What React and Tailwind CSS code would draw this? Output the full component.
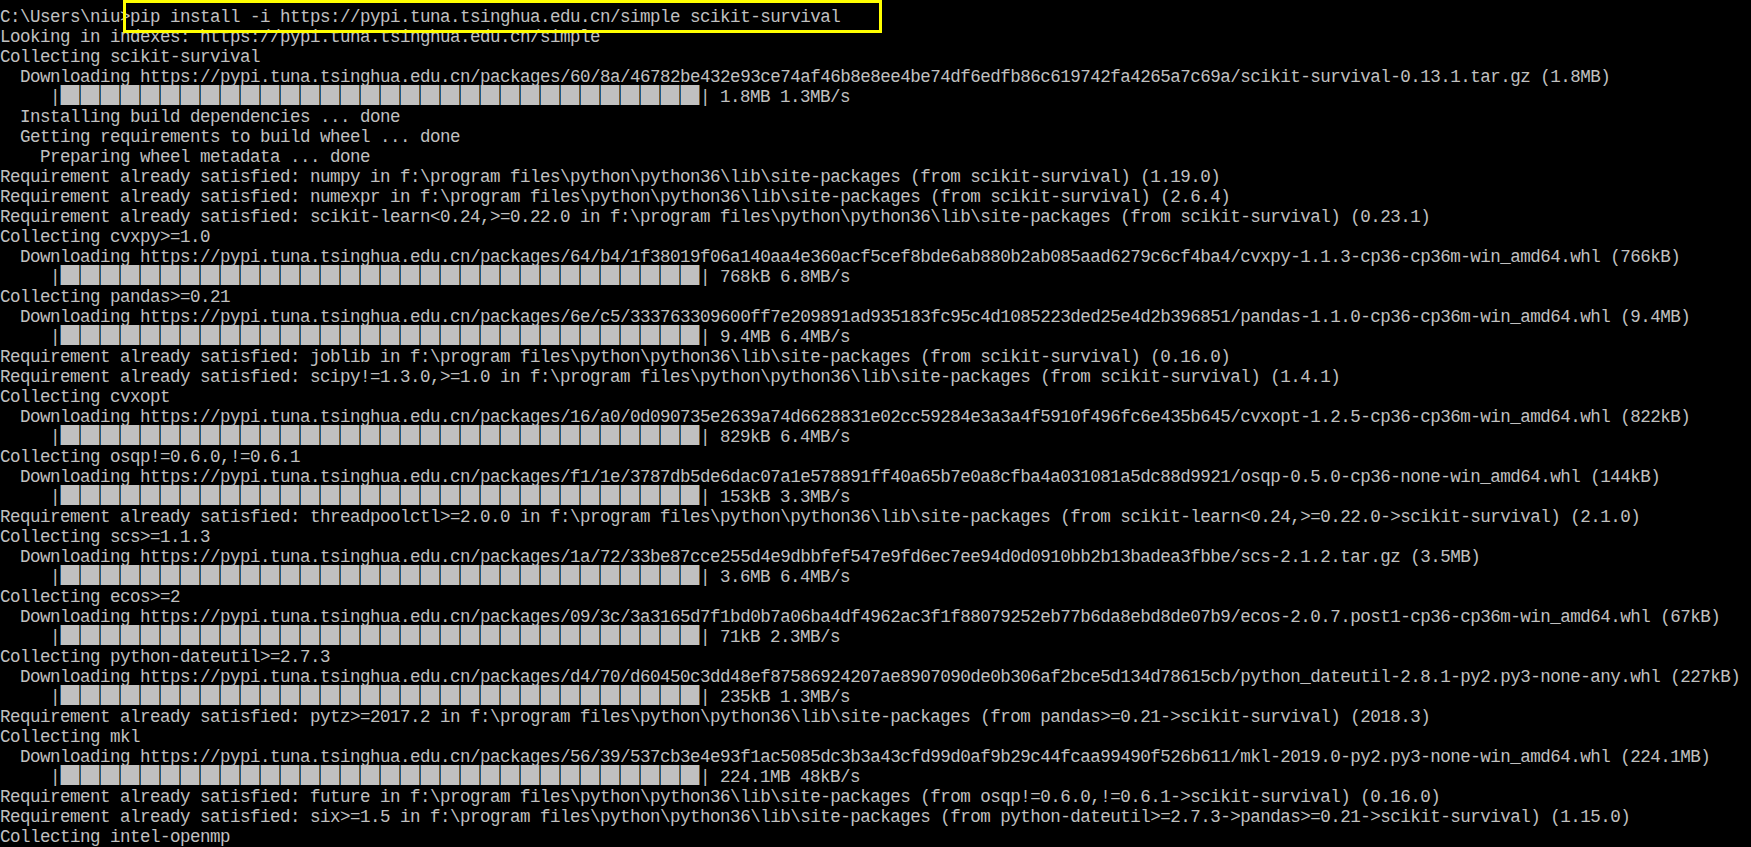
import React from "react";

const SITE = "in f:\\program files\\python\\python36\\lib\\site-packages";
const MIRROR = "https://pypi.tuna.tsinghua.edu.cn";

// each entry is one console row; bar rows carry the size / speed text
const lines = [
    "C:\\Users\\niu>pip install -i " + MIRROR + "/simple scikit-survival",
    "Looking in indexes: " + MIRROR + "/simple",
    "Collecting scikit-survival",
    "  Downloading " + MIRROR + "/packages/60/8a/46782be432e93ce74af46b8e8ee4be74df6edfb86c619742fa4265a7c69a/scikit-survival-0.13.1.tar.gz (1.8MB)",
    { bar: "1.8MB 1.3MB/s" },
    "  Installing build dependencies ... done",
    "  Getting requirements to build wheel ... done",
    "    Preparing wheel metadata ... done",
    "Requirement already satisfied: numpy " + SITE + " (from scikit-survival) (1.19.0)",
    "Requirement already satisfied: numexpr " + SITE + " (from scikit-survival) (2.6.4)",
    "Requirement already satisfied: scikit-learn<0.24,>=0.22.0 " + SITE + " (from scikit-survival) (0.23.1)",
    "Collecting cvxpy>=1.0",
    "  Downloading " + MIRROR + "/packages/64/b4/1f38019f06a140aa4e360acf5cef8bde6ab880b2ab085aad6279c6cf4ba4/cvxpy-1.1.3-cp36-cp36m-win_amd64.whl (766kB)",
    { bar: "768kB 6.8MB/s" },
    "Collecting pandas>=0.21",
    "  Downloading " + MIRROR + "/packages/6e/c5/333763309600ff7e209891ad935183fc95c4d1085223ded25e4d2b396851/pandas-1.1.0-cp36-cp36m-win_amd64.whl (9.4MB)",
    { bar: "9.4MB 6.4MB/s" },
    "Requirement already satisfied: joblib " + SITE + " (from scikit-survival) (0.16.0)",
    "Requirement already satisfied: scipy!=1.3.0,>=1.0 " + SITE + " (from scikit-survival) (1.4.1)",
    "Collecting cvxopt",
    "  Downloading " + MIRROR + "/packages/16/a0/0d090735e2639a74d6628831e02cc59284e3a3a4f5910f496fc6e435b645/cvxopt-1.2.5-cp36-cp36m-win_amd64.whl (822kB)",
    { bar: "829kB 6.4MB/s" },
    "Collecting osqp!=0.6.0,!=0.6.1",
    "  Downloading " + MIRROR + "/packages/f1/1e/3787db5de6dac07a1e578891ff40a65b7e0a8cfba4a031081a5dc88d9921/osqp-0.5.0-cp36-none-win_amd64.whl (144kB)",
    { bar: "153kB 3.3MB/s" },
    "Requirement already satisfied: threadpoolctl>=2.0.0 " + SITE + " (from scikit-learn<0.24,>=0.22.0->scikit-survival) (2.1.0)",
    "Collecting scs>=1.1.3",
    "  Downloading " + MIRROR + "/packages/1a/72/33be87cce255d4e9dbbfef547e9fd6ec7ee94d0d0910bb2b13badea3fbbe/scs-2.1.2.tar.gz (3.5MB)",
    { bar: "3.6MB 6.4MB/s" },
    "Collecting ecos>=2",
    "  Downloading " + MIRROR + "/packages/09/3c/3a3165d7f1bd0b7a06ba4df4962ac3f1f88079252eb77b6da8ebd8de07b9/ecos-2.0.7.post1-cp36-cp36m-win_amd64.whl (67kB)",
    { bar: "71kB 2.3MB/s" },
    "Collecting python-dateutil>=2.7.3",
    "  Downloading " + MIRROR + "/packages/d4/70/d60450c3dd48ef87586924207ae8907090de0b306af2bce5d134d78615cb/python_dateutil-2.8.1-py2.py3-none-any.whl (227kB)",
    { bar: "235kB 1.3MB/s" },
    "Requirement already satisfied: pytz>=2017.2 " + SITE + " (from pandas>=0.21->scikit-survival) (2018.3)",
    "Collecting mkl",
    "  Downloading " + MIRROR + "/packages/56/39/537cb3e4e93f1ac5085dc3b3a43cfd99d0af9b29c44fcaa99490f526b611/mkl-2019.0-py2.py3-none-win_amd64.whl (224.1MB)",
    { bar: "224.1MB 48kB/s" },
    "Requirement already satisfied: future " + SITE + " (from osqp!=0.6.0,!=0.6.1->scikit-survival) (0.16.0)",
    "Requirement already satisfied: six>=1.5 " + SITE + " (from python-dateutil>=2.7.3->pandas>=0.21->scikit-survival) (1.15.0)",
    "Collecting intel-openmp",
];

const blocks = Array.from({ length: 32 });

function ProgressRow({ text }) {
    return (
        <div className="flex items-start h-[20px]">
            <span className="leading-[20px]">{"     |"}</span>
            {blocks.map((_, i) => (
                <span
                    key={i}
                    className="w-[20px] h-[20px] -mt-[2px] shrink-0 bg-[#c0c0c0] border-l border-l-[#1d5b8c] border-r border-r-[#7c5a2a]"
                />
            ))}
            <span className="leading-[20px]">{"| " + text}</span>
        </div>
    );
}

export default function App() {
    return (
        <div className="relative w-full h-[847px] overflow-hidden bg-black text-[#c0c0c0] pt-[7px] font-['Liberation_Mono',monospace] text-[17.5px] tracking-[-0.5px] whitespace-pre">
            {lines.map((line, index) =>
                typeof line === "string" ? (
                    <div key={index} className="h-[20px] leading-[20px]">{line}</div>
                ) : (
                    <ProgressRow key={index} text={line.bar} />
                )
            )}

            {/* highlight drawn over the command */}
            <div className="absolute left-[123px] top-0 w-[759px] h-[33px] border-[3px] border-[#ffff00]" />
        </div>
    );
}
